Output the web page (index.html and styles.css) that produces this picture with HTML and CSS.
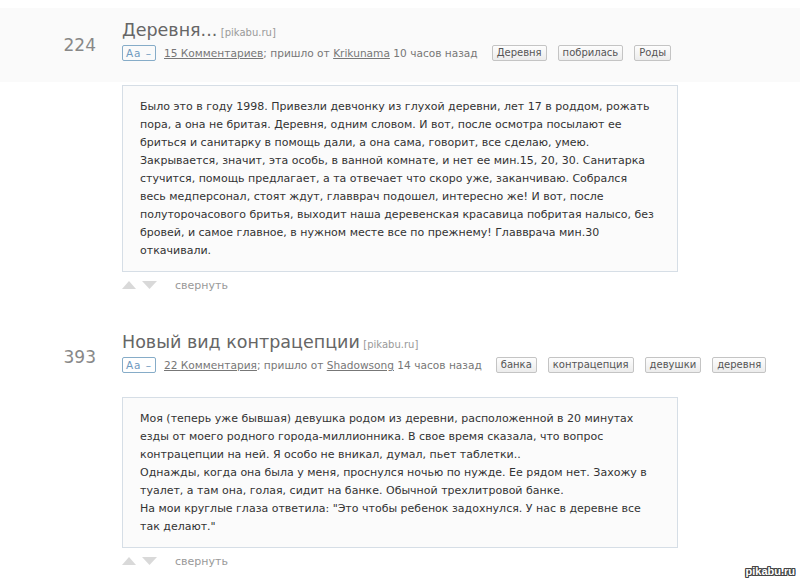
FILE: index.html
```html
<!DOCTYPE html>
<html lang="ru">
<head>
<meta charset="utf-8">
<title>pikabu</title>
<link rel="stylesheet" href="styles.css">
</head>
<body>
<div class="feed">
  <div class="post">
    <div class="post-head hl">
      <div class="score">224</div>
      <div class="head-main">
        <div class="title"><span class="title-text">Деревня...</span> <span class="src">[pikabu.ru]</span></div>
        <div class="meta"><span class="aa">Aa –</span><a class="link" href="#">15 Комментариев</a>; пришло от <a class="link" href="#">Krikunama</a> 10 часов назад<span class="tags"><span class="tag">Деревня</span><span class="tag">побрилась</span><span class="tag">Роды</span></span></div>
      </div>
    </div>
    <div class="post-body">Было это в году 1998. Привезли девчонку из глухой деревни, лет 17 в роддом, рожать пора, а она не бритая. Деревня, одним словом. И вот, после осмотра посылают ее бриться и санитарку в помощь дали, а она сама, говорит, все сделаю, умею. Закрывается, значит, эта особь, в ванной комнате, и нет ее мин.15, 20, 30. Санитарка стучится, помощь предлагает, а та отвечает что скоро уже, заканчиваю. Собрался весь медперсонал, стоят ждут, главврач подошел, интересно же! И вот, после полуторочасового бритья, выходит наша деревенская красавица побритая налысо, без бровей, и самое главное, в нужном месте все по прежнему! Главврача мин.30 откачивали.</div>
    <div class="post-foot">
      <span class="votes">
        <svg class="arrow" width="14" height="8" viewBox="0 0 14 8"><path d="M7 0L14 8H0Z" fill="#d9d9d9"/></svg>
        <svg class="arrow" width="15" height="8" viewBox="0 0 15 8"><path d="M0 0H15L7.5 8Z" fill="#d9d9d9"/></svg>
      </span>
      <a class="collapse" href="#">свернуть</a>
    </div>
  </div>

  <div class="post">
    <div class="post-head">
      <div class="score">393</div>
      <div class="head-main">
        <div class="title"><span class="title-text">Новый вид контрацепции</span> <span class="src">[pikabu.ru]</span></div>
        <div class="meta"><span class="aa">Aa –</span><a class="link" href="#">22 Комментария</a>; пришло от <a class="link" href="#">Shadowsong</a> 14 часов назад<span class="tags"><span class="tag">банка</span><span class="tag">контрацепция</span><span class="tag">девушки</span><span class="tag">деревня</span></span></div>
      </div>
    </div>
    <div class="post-body">Моя (теперь уже бывшая) девушка родом из деревни, расположенной в 20 минутах езды от моего родного города-миллионника. В свое время сказала, что вопрос контрацепции на ней. Я особо не вникал, думал, пьет таблетки..<br>Однажды, когда она была у меня, проснулся ночью по нужде. Ее рядом нет. Захожу в туалет, а там она, голая, сидит на банке. Обычной трехлитровой банке.<br>На мои круглые глаза ответила: "Это чтобы ребенок задохнулся. У нас в деревне все так делают."</div>
    <div class="post-foot">
      <span class="votes">
        <svg class="arrow" width="14" height="8" viewBox="0 0 14 8"><path d="M7 0L14 8H0Z" fill="#d9d9d9"/></svg>
        <svg class="arrow" width="15" height="8" viewBox="0 0 15 8"><path d="M0 0H15L7.5 8Z" fill="#d9d9d9"/></svg>
      </span>
      <a class="collapse" href="#">свернуть</a>
    </div>
  </div>
</div>
<div class="watermark">pikabu.ru</div>
</body>
</html>
```

FILE: styles.css
```css
html, body {
  margin: 0;
  padding: 0;
  background: #fff;
}
body {
  font-family: "DejaVu Sans", Verdana, sans-serif;
  font-size: 11px;
  color: #333;
  padding-top: 8px;
  position: relative;
  height: 575px;
  overflow: hidden;
}
.post {
  margin-bottom: 22px;
}
.post-head {
  display: flex;
  align-items: flex-start;
  height: 74px;
}
.post-head.hl {
  background: #fafafa;
}
.score {
  align-self: center;
  width: 96px;
  padding-right: 26px;
  text-align: right;
  font-size: 17px;
  color: #888;
}
.head-main {
  padding-top: 11px;
}
.title {
  height: 22px;
  line-height: 22px;
  white-space: nowrap;
}
.title-text {
  font-size: 17.5px;
  color: #666;
}
.src {
  font-size: 10px;
  color: #999;
}
.meta {
  margin-top: 4px;
  height: 16px;
  line-height: 16px;
  font-size: 10.6px;
  color: #777;
  white-space: nowrap;
}
.aa {
  display: inline-block;
  vertical-align: top;
  box-sizing: border-box;
  width: 34px;
  height: 16px;
  line-height: 14px;
  text-align: center;
  border: 1px solid #86acc8;
  border-radius: 2px;
  color: #6f9ac0;
  font-size: 10.5px;
  letter-spacing: 1px;
  margin-right: 8px;
}
.link {
  color: #777;
  text-decoration: underline;
}
.tags {
  display: inline-flex;
  vertical-align: top;
  gap: 11px;
  margin-left: 14px;
}
.tag {
  display: inline-block;
  box-sizing: border-box;
  height: 16px;
  line-height: 14px;
  padding: 0 4px;
  border: 1px solid #c4c4c4;
  border-radius: 2px;
  background: linear-gradient(#fdfdfd, #ececec);
  color: #555;
  font-size: 10px;
}
.post-body {
  margin: 3px 0 0 122px;
  width: 516px;
  padding: 12px 21px 11px 17px;
  border: 1px solid #d6dee6;
  background: #fbfbfb;
  line-height: 18px;
  color: #333;
}
.post-foot {
  display: flex;
  align-items: center;
  margin-left: 122px;
  height: 26px;
}
.votes {
  display: flex;
  gap: 6px;
  width: 53px;
}
.arrow {
  display: block;
}
.collapse {
  color: #999;
  text-decoration: none;
}
.watermark {
  position: absolute;
  right: 5px;
  bottom: 6px;
  font-family: "Liberation Sans", Arial, sans-serif;
  font-size: 11px;
  font-weight: bold;
  color: #fff;
  text-shadow: 1px 0 0 #444, -1px 0 0 #444, 0 1px 0 #444, 0 -1px 0 #444, 1px 1px 0 #444, -1px -1px 0 #444, 1px -1px 0 #444, -1px 1px 0 #444;
}
```
